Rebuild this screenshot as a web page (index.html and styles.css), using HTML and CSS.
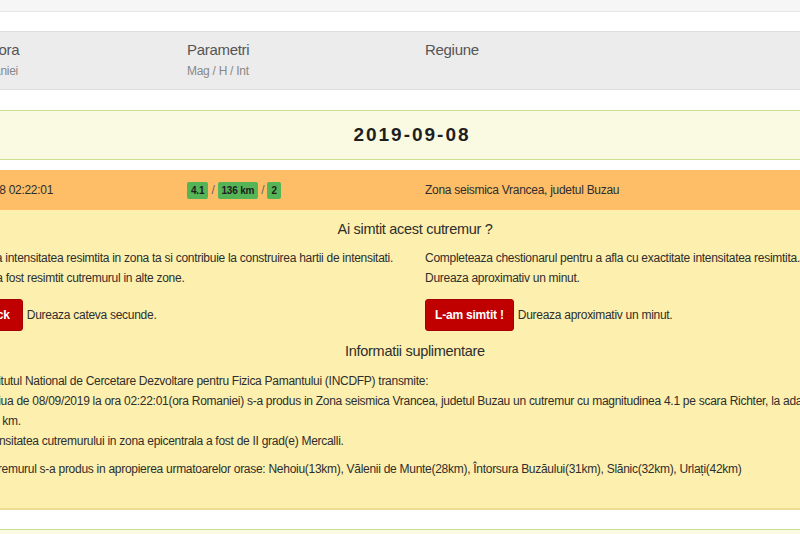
FILE: index.html
```html
<!DOCTYPE html>
<html lang="ro">
<head>
  <meta charset="UTF-8">
  <meta name="viewport" content="width=device-width, initial-scale=1.0">
  <title>Cutremure</title>
  <link rel="stylesheet" href="styles.css">
</head>
<body>
  <div class="topbar"></div>

  <div class="wrap">
    <div class="thead">
      <div class="col">
        <div class="th">Data si ora</div>
        <div class="sub">ora Romaniei</div>
      </div>
      <div class="col">
        <div class="th">Parametri</div>
        <div class="sub">Mag / H / Int</div>
      </div>
      <div class="col">
        <div class="th">Regiune</div>
      </div>
    </div>

    <div class="day">2019-09-08</div>

    <div class="quake">
      <div class="col">2019-09-08 02:22:01</div>
      <div class="col">
        <span class="badge">4.1</span> <span class="sep">/</span>
        <span class="badge">136 km</span> <span class="sep">/</span>
        <span class="badge">2</span>
      </div>
      <div class="col">Zona seismica Vrancea, judetul Buzau</div>
    </div>

    <div class="details">
      <h3>Ai simtit acest cutremur ?</h3>
      <div class="halves">
        <div class="half">
          <p>Raporteaza intensitatea resimtita in zona ta si contribuie la construirea hartii de intensitati.<br>
          Vezi unde a fost resimtit cutremurul in alte zone.</p>
          <div class="action"><button class="btn quick">Feedback</button> Dureaza cateva secunde.</div>
        </div>
        <div class="half">
          <p>Completeaza chestionarul pentru a afla cu exactitate intensitatea resimtita.<br>
          Dureaza aproximativ un minut.</p>
          <div class="action"><button class="btn">L-am simtit !</button> Dureaza aproximativ un minut.</div>
        </div>
      </div>

      <h3>Informatii suplimentare</h3>
      <div class="info">
        <p>Institutul National de Cercetare Dezvoltare pentru Fizica Pamantului (INCDFP) transmite:<br>
        In ziua de 08/09/2019 la ora 02:22:01(ora Romaniei) s-a produs in Zona seismica Vrancea, judetul Buzau un cutremur cu magnitudinea 4.1 pe scara Richter, la adancimea de 136 km.<br>
        Intensitatea cutremurului in zona epicentrala a fost de II grad(e) Mercalli.</p>
        <p class="near">Cutremurul s-a produs in apropierea urmatoarelor orase: Nehoiu(13km), Vălenii de Munte(28km), Întorsura Buzăului(31km), Slănic(32km), Urlați(42km)</p>
      </div>
    </div>

    <div class="day next"></div>
  </div>
</body>
</html>
```

FILE: styles.css
```css
body {
  margin: 0;
  font-family: "Liberation Sans", Arial, sans-serif;
  font-size: 12px;
  letter-spacing: -0.28px;
  color: #2e2e2e;
  background: white;
  overflow: hidden;
}
.topbar {
  height: 11px;
  background: #f6f6f6;
  border-bottom: 1px solid #e6e6e6;
}
.wrap {
  width: 984px;
  margin: 19px 0 0 -77px;
}
.thead {
  display: grid;
  grid-template-columns: 248px 238px 1fr;
  padding: 8px 0 9px 6px;
  background: #ececec;
  border-top: 1px solid #dedede;
  border-bottom: 1px solid #dedede;
}
.quake {
  display: grid;
  grid-template-columns: 240px 238px 1fr;
  padding-left: 14px;
  margin-top: 10px;
  height: 40px;
  align-items: center;
  background: #fdbe67;
}
.thead .col:first-child {
  padding-left: 21px;
}
.col {
  padding: 0 10px;
}
.th {
  font-size: 15px;
  line-height: 20px;
  color: #555;
  letter-spacing: -0.3px;
}
.sub {
  margin-top: 2px;
  line-height: 18px;
  color: #888;
}
.day {
  margin-top: 20px;
  height: 48px;
  padding-right: 6px;
  line-height: 48px;
  background: #fafae2;
  border: 1px solid #c8e08f;
  text-align: center;
  font-size: 19px;
  font-weight: bold;
  letter-spacing: 2px;
  color: #1e1e1e;
}
.day.next {
  margin-top: 19px;
}
.badge {
  display: inline-block;
  background: #55b456;
  color: #1d1d1d;
  font-size: 10px;
  font-weight: bold;
  letter-spacing: -0.2px;
  line-height: 17px;
  padding: 0 4px;
  border-radius: 2px;
}
.sep {
  color: #666;
}
.details {
  background: #fdefad;
  border-bottom: 2px solid #efdc92;
  padding: 9px 10px 29px;
}
.details h3 {
  margin: 0;
  font-size: 14.5px;
  font-weight: normal;
  line-height: 20px;
  letter-spacing: -0.3px;
  text-align: center;
  color: #2e2e2e;
}
.halves {
  display: grid;
  grid-template-columns: 1fr 1fr;
  margin: 9px 0 10px;
}
.half {
  padding: 0 10px;
}
.half p {
  margin: 0;
  line-height: 20px;
}
.action {
  margin-top: 11px;
  height: 32px;
  line-height: 32px;
}
.btn {
  font-family: inherit;
  font-size: 12px;
  font-weight: bold;
  letter-spacing: -0.2px;
  color: white;
  background: #c00000;
  border: 1px solid #a80000;
  border-radius: 3px;
  height: 32px;
  padding: 0 9px;
  margin-right: 1px;
  vertical-align: top;
}
.btn.quick {
  padding: 0 12px;
}
.info {
  margin-top: 10px;
  padding: 0 27px 0 47px;
}
.info p {
  margin: 0;
  line-height: 20px;
}
.info .near {
  margin-top: 8px;
}
```
